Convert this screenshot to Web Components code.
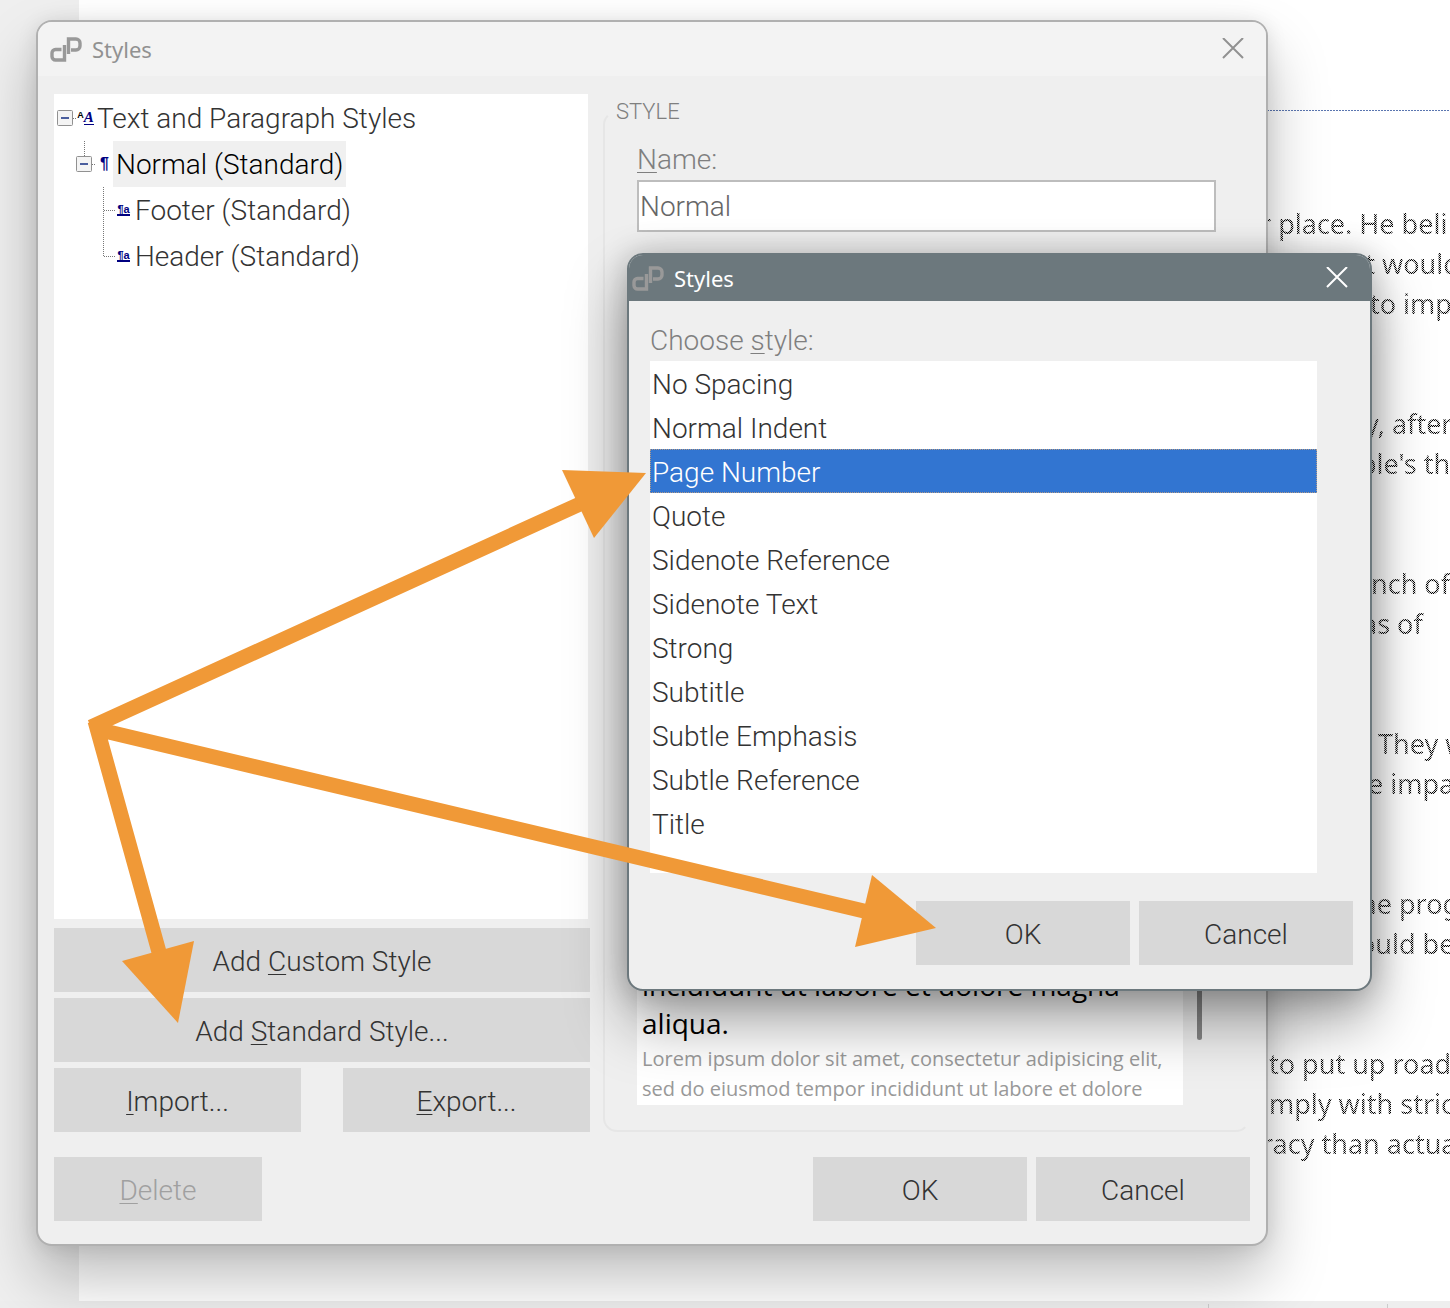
<!DOCTYPE html>
<html lang="en">
<head>
<meta charset="utf-8">
<title>Styles</title>
<style>
    body {
        margin: 0;
        font-family: Roboto, "Liberation Sans", sans-serif;
        font-weight: 300;
        font-size: 28px;
        color: #333;
    }
    #main {
        position: absolute;
        top: 20px;
        left: 36px;
        right: 182px;
    }
    #chooser {
        position: absolute;
        top: 253px;
        left: 627px;
        right: 78px;
    }
    .columns {
        display: grid;
        grid-template-columns: 536fr 647fr;
        gap: 13px;
    }
    .left {
        display: grid;
        grid-template-columns: 1fr 1fr;
        column-gap: 42px;
        row-gap: 6px;
    }
    tree-view,
    .wide {
        grid-column: 1 / -1;
    }
    .footer {
        display: flex;
        gap: 9px;
    }
    .footer push-button {
        width: 214px;
    }
    .footer push-button.delete {
        width: 208px;
        margin-right: auto;
    }
    #main .footer {
        margin-top: 25px;
    }
    #chooser .footer {
        justify-content: flex-end;
        margin-top: 28px;
    }
    u {
        text-decoration-thickness: 1px;
        text-underline-offset: 3px;
    }
</style>
</head>
<body>
<desk-top>
    <doc-page></doc-page>
    <app-window id="main" caption="Styles">
        <div class="columns">
            <div class="left">
                <tree-view>
                    <tree-row level="0" branch="root" icon="fonts">Text and Paragraph Styles</tree-row>
                    <tree-row level="1" branch="open" icon="para" selected>Normal (Standard)</tree-row>
                    <tree-row level="2" branch="mid" icon="linked">Footer (Standard)</tree-row>
                    <tree-row level="2" branch="last" icon="linked">Header (Standard)</tree-row>
                </tree-view>
                <push-button class="wide">Add <u>C</u>ustom Style</push-button>
                <push-button class="wide">Add <u>S</u>tandard Style...</push-button>
                <push-button><u>I</u>mport...</push-button>
                <push-button><u>E</u>xport...</push-button>
            </div>
            <style-group></style-group>
        </div>
        <div class="footer">
            <push-button class="delete" disabled><u>D</u>elete</push-button>
            <push-button>OK</push-button>
            <push-button>Cancel</push-button>
        </div>
    </app-window>
    <app-window id="chooser" caption="Styles" active>
        <style-list value="Page Number"></style-list>
        <div class="footer">
            <push-button>OK</push-button>
            <push-button>Cancel</push-button>
        </div>
    </app-window>
    <arrow-overlay></arrow-overlay>
</desk-top>

<script>
class DeskTop extends HTMLElement {
    constructor() {
        super();
        this.attachShadow({mode: "open"}).innerHTML = `
        <style>
        :host {
            display: block;
            position: relative;
            height: 100vh;
            min-height: 1308px;
            overflow: hidden;
        }
        </style>
        <slot></slot>
        `;
    }
}

class DocPage extends HTMLElement {
    constructor() {
        super();
        this.shadowDOM = this.attachShadow({mode: "open"});
    }

    connectedCallback() {
        // each line: start on the page, text
        const paragraphs = [
            [[1181, "r place. He beli"], [1253, "but would"], [1291, "to imp"]],
            [[1286, "y, after"], [1281, "ple's th"]],
            [[1292, "nch of"], [1283, "as of"]],
            [[1299, "They w"], [1289, "e impa"]],
            [[1281, "he prog"], [1280, "ould be"]],
            [[1190, "to put up road"], [1190, "mply with stric"], [1183, "racy than actua"]],
        ];
        this.shadowDOM.innerHTML = `
        <style>
        :host {
            display: grid;
            grid-template-columns: 79px 1fr;
            grid-template-rows: 1fr 7px;
            height: 100%;
            background: #efefef;
        }
        .page {
            grid-column: 2;
            overflow: hidden;
            background: #fff;
        }
        .margin {
            height: 1px;
            margin-top: 110px;
            background: repeating-linear-gradient(90deg, #5b76b0 0 2px, #fff 2px 3px);
        }
        .text {
            display: grid;
            gap: 80px;
            margin-top: 93px;
            font: 27px/40px "Noto Sans", sans-serif;
            color: #000;
            white-space: nowrap;
            -webkit-mask-image: repeating-conic-gradient(#000 0 25%, #0002 0 50%);
            -webkit-mask-size: 2px 2px;
        }
        p {
            margin: 0;
        }
        .status {
            grid-column: 1 / -1;
            display: flex;
            justify-content: flex-end;
            padding-right: 62px;
            background: #eee;
        }
        .status i {
            width: 178px;
            margin-top: 3px;
            border: solid #ccc;
            border-width: 0 1px;
        }
        </style>
        <div class="page">
            <div class="margin"></div>
            <div class="text">
                ${paragraphs.map(lines => `<div>${lines.map(([x, text]) =>
                    `<p style="text-indent: ${x}px">${text}</p>`).join("")}</div>`).join("")}
            </div>
        </div>
        <div class="status"><i></i></div>
        `;
    }
}

class AppWindow extends HTMLElement {
    constructor() {
        super();
        this.shadowDOM = this.attachShadow({mode: "open"});
    }

    connectedCallback() {
        this.shadowDOM.innerHTML = `
        <style>
        :host {
            display: block;
            box-sizing: border-box;
            overflow: hidden;
            border: 2px solid #b0b0b0;
            border-radius: 16px;
            background: #efefef;
            box-shadow: 0 32px 60px rgba(0, 0, 0, 0.26), 0 2px 20px rgba(0, 0, 0, 0.1);
        }
        :host([active]) {
            border-color: #6c787d;
            box-shadow: 0 32px 60px rgba(0, 0, 0, 0.36), 0 2px 32px rgba(0, 0, 0, 0.24);
        }
        header {
            display: flex;
            align-items: center;
            gap: 10px;
            height: 54px;
            padding: 0 22px 0 12px;
            background: #f3f3f3;
            color: #919191;
            font: 22px/30px "Noto Sans", sans-serif;
        }
        :host([active]) header {
            height: 46px;
            padding-left: 3px;
            background: #6c787d;
            color: #fff;
        }
        .logo {
            width: 32px;
            height: 25px;
            fill: none;
            stroke: #999;
            stroke-width: 3.4;
        }
        button {
            display: flex;
            margin-left: auto;
            padding: 0;
            border: 0;
            background: none;
            color: inherit;
        }
        button svg {
            width: 22px;
            height: 22px;
            stroke: currentColor;
            stroke-width: 2;
        }
        .body {
            padding: 18px 16px 23px;
        }
        :host([active]) .body {
            padding: 20px 17px 24px 21px;
        }
        </style>
        <header>
            <svg class="logo" viewBox="0 0 32 25">
                <path d="M14.500 8V23H5.500a3.500 3.500 0 0 1-3.500-3.500V16a3.500 3.500 0 0 1 3.500-3.500H11.500"/>
                <path d="M18.500 17V2H26a4 4 0 0 1 4 4v3a4 4 0 0 1-4 4H21"/>
            </svg>
            <span>${this.getAttribute("caption")}</span>
            <button aria-label="Close">
                <svg viewBox="0 0 22 22"><path d="M1 0L21 20M21 0L1 20"/></svg>
            </button>
        </header>
        <div class="body"><slot></slot></div>
        `;
    }
}

class PushButton extends HTMLElement {
    constructor() {
        super();
        this.shadowDOM = this.attachShadow({mode: "open"});
    }

    connectedCallback() {
        this.shadowDOM.innerHTML = `
        <style>
        :host {
            display: block;
        }
        button {
            width: 100%;
            height: 64px;
            padding: 2px 0 0;
            border: 0;
            background: #d8d8d8;
            font: inherit;
            color: #333;
        }
        button:disabled {
            color: #a0a0a0;
        }
        </style>
        <button ${this.hasAttribute("disabled") ? "disabled" : ""}><slot></slot></button>
        `;
    }
}

class TreeView extends HTMLElement {
    constructor() {
        super();
        this.attachShadow({mode: "open"}).innerHTML = `
        <style>
        :host {
            display: block;
            box-sizing: border-box;
            height: 825px;
            margin: 0 2px 3px 0;
            padding: 1px 3px;
            background: #fff;
        }
        </style>
        <div role="tree"><slot></slot></div>
        `;
    }
}

const box = `
    <rect x=".5" y="15.500" width="15" height="15" rx="1" fill="#f4f4f4" stroke="#919191"/>
    <path d="M4 23H12" stroke="#4b5f9e" stroke-width="2"/>`;
const dots = d => `<path d="${d}" fill="none" stroke="#777" stroke-dasharray="1 1"/>`;

const branches = {
    root: box + dots("M16 23.500H20"),
    open: dots("M8.500 0V15") + box + dots("M16 23.500H20"),
    mid: dots("M8.500 0V46") + dots("M9 23.500H20"),
    last: dots("M8.500 0V23") + dots("M9 23.500H20"),
};

const icons = {
    fonts: `<small>A</small><i>A</i>`,
    para: `<b>¶</b>`,
    linked: `<em>¶a</em>`,
};

class TreeRow extends HTMLElement {
    constructor() {
        super();
        this.shadowDOM = this.attachShadow({mode: "open"});
    }

    connectedCallback() {
        this.shadowDOM.innerHTML = `
        <style>
        :host {
            display: flex;
            align-items: center;
            height: 46px;
            line-height: 44px;
            padding-left: calc(${this.getAttribute("level")} * 19px);
        }
        :host([selected]) .label {
            background: #f0f0f0;
            color: #000;
        }
        .label {
            padding: 2px 3px 0;
        }
        svg {
            width: 20px;
            height: 46px;
        }
        .icon {
            display: flex;
            justify-content: center;
            width: 17px;
            font: bold 11px/12px "Liberation Sans", sans-serif;
            color: #000080;
        }
        small {
            font-size: 9px;
            line-height: 8px;
            color: #000;
        }
        i {
            font: italic bold 15px/13px "Liberation Serif", serif;
            border-bottom: 1px solid;
        }
        b {
            font-size: 16px;
        }
        em {
            font-style: normal;
            line-height: 10px;
            border-bottom: 2px solid;
        }
        </style>
        <svg viewBox="0 0 20 46">${branches[this.getAttribute("branch")]}</svg>
        <span class="icon" aria-hidden="true">${icons[this.getAttribute("icon")]}</span>
        <span class="label"><slot></slot></span>
        `;
    }
}

class StyleGroup extends HTMLElement {
    constructor() {
        super();
        this.shadowDOM = this.attachShadow({mode: "open"});
    }

    connectedCallback() {
        this.shadowDOM.innerHTML = `
        <style>
        :host {
            display: grid;
        }
        fieldset {
            display: flex;
            flex-direction: column;
            min-width: 0;
            margin: 0;
            padding: 10px 32px 25px;
            border: 2px solid;
            border-color: transparent transparent #e6e6e6 #e6e6e6;
            border-radius: 14px;
            color: #7f7f7f;
        }
        legend {
            margin-left: -21px;
            padding: 0;
            font-size: 22px;
            line-height: 36px;
        }
        label {
            line-height: 40px;
        }
        u {
            text-decoration-thickness: 1px;
            text-underline-offset: 3px;
        }
        input {
            box-sizing: border-box;
            width: 100%;
            height: 52px;
            padding: 0 1px;
            border: 2px solid #bdbdbd;
            background: #fff;
            font: inherit;
            color: #666;
        }
        .preview {
            display: flex;
            flex: 1;
            gap: 14px;
            margin-top: 60px;
        }
        .sample {
            flex: 1;
            display: flex;
            flex-direction: column;
            justify-content: flex-end;
            padding: 0 5px 1px;
            background: #fff;
            font-family: "Open Sans", sans-serif;
            font-weight: 400;
            white-space: nowrap;
        }
        p {
            margin: 0;
            font-size: 20px;
            line-height: 30px;
            color: #999;
        }
        p.current {
            font-size: 28px;
            line-height: 38px;
            color: #000;
        }
        p.current + p:not(.current) {
            margin-top: 2px;
        }
        .thumb {
            align-self: flex-end;
            width: 5px;
            height: 300px;
            margin: 0 14px 65px 0;
            border-radius: 3px;
            background: #868686;
        }
        </style>
        <fieldset>
            <legend>STYLE</legend>
            <label for="name"><u>N</u>ame:</label>
            <input id="name" type="text" value="Normal">
            <div class="preview">
                <div class="sample">
                    <p class="current">incididunt ut labore et dolore magna</p>
                    <p class="current">aliqua.</p>
                    <p>Lorem ipsum dolor sit amet, consectetur adipisicing elit,</p>
                    <p>sed do eiusmod tempor incididunt ut labore et dolore</p>
                </div>
                <div class="thumb"></div>
            </div>
        </fieldset>
        `;
    }
}

class StyleList extends HTMLElement {
    constructor() {
        super();
        this.shadowDOM = this.attachShadow({mode: "open"});
    }

    connectedCallback() {
        const names = ["No Spacing", "Normal Indent", "Page Number", "Quote", "Sidenote Reference",
            "Sidenote Text", "Strong", "Subtitle", "Subtle Emphasis", "Subtle Reference", "Title"];
        const value = this.getAttribute("value");
        this.shadowDOM.innerHTML = `
        <style>
        :host {
            display: block;
            margin-right: 36px;
        }
        #caption {
            line-height: 40px;
            color: #7f7f7f;
        }
        u {
            text-decoration-thickness: 1px;
            text-underline-offset: 3px;
        }
        ul {
            box-sizing: border-box;
            height: 512px;
            margin: 0;
            padding: 0;
            list-style: none;
            background: #fff;
        }
        li {
            box-sizing: border-box;
            height: 44px;
            padding: 0 1px;
            border: 1px solid transparent;
            line-height: 46px;
        }
        li[aria-selected="true"] {
            border: 1px dotted #b09a88;
            background: #3275d1;
            color: #fff;
        }
        </style>
        <div id="caption">Choose <u>s</u>tyle:</div>
        <ul role="listbox" aria-labelledby="caption" tabindex="0">
            ${names.map(name => `<li role="option" aria-selected="${name === value}">${name}</li>`).join("")}
        </ul>
        `;
    }
}

class ArrowOverlay extends HTMLElement {
    constructor() {
        super();
        this.attachShadow({mode: "open"}).innerHTML = `
        <style>
        :host {
            position: absolute;
            top: 0;
            left: 0;
            pointer-events: none;
        }
        svg {
            display: block;
            fill: #f09937;
            stroke: #f09937;
        }
        polygon {
            stroke: none;
        }
        </style>
        <svg width="1450" height="1308" viewBox="0 0 1450 1308">
            <path d="M91 727L580 504M96 729L866 911.500M95 721L159 952" fill="none" stroke-width="15"/>
            <polygon points="646,473 562,470 594,538"/>
            <polygon points="936,928 872,875 855,947"/>
            <polygon points="178,1023 122,961 194,941"/>
        </svg>
        `;
    }
}

customElements.define("desk-top", DeskTop);
customElements.define("doc-page", DocPage);
customElements.define("app-window", AppWindow);
customElements.define("push-button", PushButton);
customElements.define("tree-view", TreeView);
customElements.define("tree-row", TreeRow);
customElements.define("style-group", StyleGroup);
customElements.define("style-list", StyleList);
customElements.define("arrow-overlay", ArrowOverlay);
</script>
</body>
</html>
